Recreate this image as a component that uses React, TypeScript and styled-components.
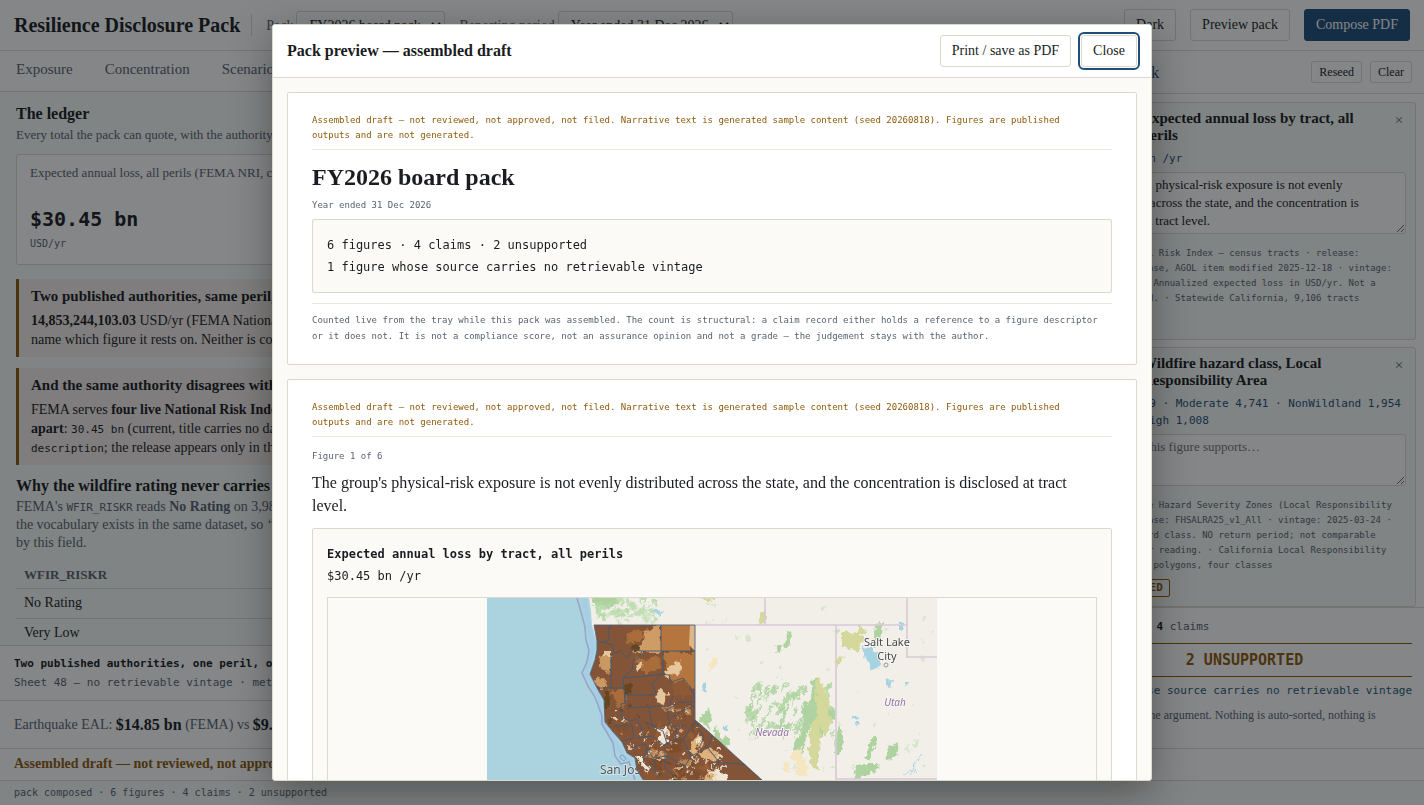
import React from "react";
import styled, { createGlobalStyle, css } from "styled-components";

const serif = `Georgia, "Liberation Serif", serif`;
const mono = `Consolas, "DejaVu Sans Mono", monospace`;

const c = {
  ink: "#1a1c22",
  muted: "#5a6270",
  line: "#ddd8cc",
  soft: "#e8e6df",
  page: "#f7faf6",
  panel: "#ffffff",
  cream: "#fcfaf6",
  amber: "#8f5a0a",
  blue: "#1f4e7a",
  teal: "#1d5c70",
};

const Global = createGlobalStyle`
  *, *::before, *::after { box-sizing: border-box; }
  html, body, #root { height: 100%; }
  body { margin: 0; overflow: hidden; background: ${c.page}; color: ${c.ink}; font: 14px/19px ${serif}; }
  h1, h2, h3, p { margin: 0; }
  button, select, textarea { font-family: inherit; color: inherit; }
`;

/* ---------- shared parts ---------- */

const Button = styled.button<{ $kind?: "primary" | "small"; $focused?: boolean }>`
  height: 32px;
  padding: 0 11px;
  border: 1px solid ${c.line};
  border-radius: 3px;
  background: ${c.panel};
  font-size: 14px;
  line-height: 18px;
  white-space: nowrap;
  ${(p) =>
    p.$kind === "primary" &&
    css`
      border-color: ${c.blue};
      background: ${c.blue};
      color: #fff;
    `}
  ${(p) =>
    p.$kind === "small" &&
    css`
      height: 22px;
      padding: 0 7px;
      font-size: 12px;
      line-height: 16px;
    `}
  ${(p) =>
    p.$focused &&
    css`
      outline: 2px solid ${c.blue};
      outline-offset: 1px;
    `}
`;

/* ---------- page shell ---------- */

const Shell = styled.div`
  display: flex;
  flex-direction: column;
  height: 100vh;
`;

const TopBar = styled.header`
  display: flex;
  align-items: center;
  gap: 14px;
  flex: none;
  height: 51px;
  padding: 0 14px;
  background: ${c.panel};
  border-bottom: 1px solid ${c.line};
`;

const Brand = styled.h1`
  padding-right: 11px;
  border-right: 1px solid ${c.line};
  font-size: 20px;
  line-height: 22px;
  white-space: nowrap;
`;

const Field = styled.label`
  display: flex;
  align-items: center;
  gap: 3px;
  color: ${c.muted};
  font-size: 14px;
  white-space: nowrap;
`;

const Select = styled.select<{ $width: number }>`
  width: ${(p) => p.$width}px;
  height: 28px;
  padding: 0 4px 0 8px;
  border: 1px solid ${c.line};
  border-radius: 3px;
  background: ${c.panel};
  color: ${c.ink};
  font-size: 14px;
`;

const Spacer = styled.div`
  flex: 1;
`;

const Workspace = styled.div`
  display: grid;
  grid-template-columns: minmax(0, 1fr) 360px;
  flex: 1;
  min-height: 0;
`;

const LeftColumn = styled.div`
  display: flex;
  flex-direction: column;
  min-height: 0;
`;

const Tabs = styled.nav`
  display: flex;
  flex: none;
  height: 41px;
  background: ${c.panel};
  border-bottom: 1px solid ${c.line};
`;

const Tab = styled.a`
  padding: 9px 16px;
  color: ${c.muted};
  font-size: 15px;
  text-decoration: none;
`;

const Main = styled.main`
  flex: 1;
  min-height: 0;
  padding: 12px 16px 0;
  overflow: hidden;
`;

const SectionTitle = styled.h2`
  margin-bottom: 2px;
  font-size: 16px;
  line-height: 20px;
`;

const Lead = styled.p`
  margin-bottom: 10px;
  color: ${c.muted};
  font-size: 13px;
  line-height: 18px;
  white-space: nowrap;
`;

const Figures = styled.div`
  display: grid;
  grid-template-columns: 1fr 1fr 1fr;
  gap: 12px;
`;

const FigureCard = styled.section`
  height: 111px;
  padding: 9px 13px;
  border: 1px solid ${c.line};
  border-radius: 3px;
  background: ${c.panel};
  color: ${c.muted};
  font-size: 13px;
  line-height: 18px;
  white-space: nowrap;
  overflow: hidden;
`;

const FigureValue = styled.p`
  margin-top: 24px;
  color: ${c.ink};
  font: bold 20px/26px ${mono};
`;

const FigureUnit = styled.p`
  margin-top: 2px;
  font: 10px/20px ${mono};
`;

const Callout = styled.section`
  margin-top: 11px;
  padding: 7px 12px 8px;
  border-left: 3px solid ${c.amber};
  background: #f4ede8;
  font-size: 14px;
  line-height: 19px;
  white-space: nowrap;
  overflow: hidden;

  ${Figures} + & {
    margin-top: 14px;
  }
  code {
    font: 11px/14px ${mono};
  }
`;

const CalloutTitle = styled.h3`
  margin-bottom: 5px;
  font-size: 15px;
  line-height: 20px;
`;

const Explainer = styled.section`
  margin-top: 11px;
  color: ${c.muted};
  line-height: 18px;
  white-space: nowrap;
  ${SectionTitle} {
    color: ${c.ink};
  }
  code {
    font: 11px/14px ${mono};
  }
`;

const Ratings = styled.table`
  width: 100%;
  margin-top: 11px;
  border-collapse: collapse;
  color: ${c.ink};
  th,
  td {
    height: 30px;
    padding: 0 8px;
    border-bottom: 1px solid ${c.line};
    text-align: left;
  }
  th {
    height: 25px;
    color: ${c.muted};
    font-size: 13px;
  }
`;

const Finding = styled.div`
  flex: none;
  height: 55px;
  padding: 8px 14px;
  border-top: 1px solid ${c.line};
  background: ${c.panel};
  color: ${c.muted};
  font: 11px/19px ${mono};
  white-space: nowrap;
  overflow: hidden;
  b {
    display: block;
    color: ${c.ink};
  }
`;

const Comparison = styled.div`
  display: flex;
  align-items: center;
  flex: none;
  height: 48px;
  padding: 0 14px;
  border-top: 1px solid ${c.line};
  background: ${c.panel};
  color: ${c.muted};
  font-size: 14px;
  white-space: pre;
  b {
    color: ${c.ink};
    font-size: 16px;
  }
`;

const DraftBar = styled.div`
  flex: none;
  height: 32px;
  padding: 5px 14px;
  border-top: 1px solid ${c.line};
  background: ${c.panel};
  color: ${c.amber};
  font-weight: bold;
`;

const StatusBar = styled.footer`
  flex: none;
  height: 25px;
  padding: 0 14px;
  border-top: 1px solid ${c.line};
  color: ${c.muted};
  font: 10px/23px ${mono};
`;

/* ---------- evidence tray ---------- */

const Tray = styled.aside`
  display: flex;
  flex-direction: column;
  min-height: 0;
  border-left: 1px solid ${c.line};
  background: ${c.panel};
`;

const TrayHead = styled.div`
  display: flex;
  align-items: center;
  gap: 8px;
  flex: none;
  height: 43px;
  padding: 0 12px;
  border-bottom: 1px solid ${c.line};
  h2 {
    flex: 1;
    color: ${c.blue};
    font-size: 16px;
    font-weight: normal;
  }
`;

const TrayList = styled.div`
  flex: 1;
  min-height: 0;
  padding: 8px;
  overflow: hidden;
`;

const TrayCard = styled.article`
  min-height: 238px;
  margin-bottom: 7px;
  padding: 7px 9px 8px;
  border: 1px solid ${c.line};
  border-radius: 3px;
  background: ${c.page};
`;

const TrayCardHead = styled.div`
  display: grid;
  grid-template-columns: 51px minmax(0, 1fr) 14px;
  gap: 8px;
  h3 {
    font-size: 15px;
    line-height: 17px;
    white-space: pre-line;
  }
`;

const OrderLabel = styled.span`
  color: ${c.muted};
  font: 10px/17px ${mono};
`;

const Remove = styled.button`
  height: 20px;
  padding: 0;
  border: 0;
  background: none;
  color: ${c.muted};
  font-size: 15px;
`;

const Reading = styled.p`
  margin: 6px 0 5px;
  color: ${c.blue};
  font: 11px/17px ${mono};
  white-space: pre;
`;

const Claim = styled.textarea<{ $tall?: boolean }>`
  display: block;
  width: 100%;
  height: ${(p) => (p.$tall ? 62 : 52)}px;
  padding: 3px 7px;
  border: 1px solid ${c.line};
  border-radius: 3px;
  background: ${c.panel};
  font: 13px/18px ${serif};
  resize: vertical;
  overflow: hidden;
  &::placeholder {
    color: #757575;
  }
`;

const Source = styled.p`
  margin: 12px 0 6px;
  color: ${c.muted};
  font: 9px/15px ${mono};
  white-space: pre-line;
`;

const Chip = styled.span`
  display: inline-block;
  padding: 0 6px;
  border: 1px solid ${c.amber};
  border-radius: 2px;
  color: ${c.amber};
  font: bold 11px/16px ${mono};
  vertical-align: top;
`;

const TrayFoot = styled.div`
  flex: none;
  height: 141px;
  padding: 10px 12px 0;
  border-top: 1px solid ${c.line};
  color: ${c.muted};
  font: 11px/18px ${mono};
  b {
    color: ${c.ink};
  }
`;

const Unsupported = styled.p`
  margin-top: 7px;
  border: solid ${c.amber};
  border-width: 1px 0;
  color: ${c.amber};
  font: bold 15px/32px ${mono};
  text-align: center;
`;

const Vintage = styled.p`
  display: flex;
  justify-content: flex-end;
  margin: 5px 0 6px;
  color: ${c.teal};
  white-space: nowrap;
`;

const Hint = styled.p`
  font: 12px/18px ${serif};
  white-space: pre-line;
`;

/* ---------- preview dialog ---------- */

const Scrim = styled.div`
  position: fixed;
  inset: 0;
  display: flex;
  align-items: center;
  justify-content: center;
  background: rgba(10, 13, 18, 0.5);
`;

const Dialog = styled.div`
  display: flex;
  flex-direction: column;
  width: min(880px, 94vw);
  max-height: 94vh;
  border: 1px solid ${c.line};
  border-radius: 3px;
  background: ${c.cream};
  box-shadow: 0 12px 40px rgba(0, 0, 0, 0.35);
  overflow: hidden;
`;

const DialogHead = styled.div`
  display: flex;
  align-items: center;
  gap: 10px;
  flex: none;
  padding: 10px 14px;
  border-bottom: 1px solid ${c.line};
  background: ${c.panel};
  h2 {
    flex: 1;
    font-size: 16px;
    line-height: 20px;
  }
`;

const DialogBody = styled.div`
  flex: 1;
  min-height: 0;
  padding: 14px;
  overflow-y: auto;
  scrollbar-width: none;
`;

const Sheet = styled.section`
  margin-bottom: 14px;
  padding: 20px 24px;
  border: 1px solid ${c.line};
  border-radius: 2px;
  background: ${c.panel};
`;

const Notice = styled.p`
  padding-bottom: 6px;
  border-bottom: 1px solid ${c.soft};
  color: ${c.amber};
  font: 9px/15px ${mono};
  white-space: pre-line;
`;

const PackTitle = styled.h2`
  margin: 14px 0 8px;
  font-size: 24px;
  line-height: 26px;
`;

const Small = styled.p`
  color: ${c.muted};
  font: 9px/15px ${mono};
`;

const Panel = styled.div`
  margin-top: 6px;
  padding: 14px;
  border: 1px solid ${c.line};
  border-radius: 2px;
  background: ${c.cream};
  font: 12px/22px ${mono};
`;

const Footnote = styled.p`
  margin-top: 10px;
  padding-top: 8px;
  border-top: 1px solid ${c.soft};
  color: ${c.muted};
  font: 9px/16px ${mono};
  white-space: pre-line;
`;

const Narrative = styled.p`
  margin: 7px 0 11px;
  font-size: 16px;
  line-height: 23px;
  white-space: pre-line;
`;

const FigureSheet = styled(Sheet)`
  ${Small} {
    margin-top: 12px;
  }
`;

const MapFrame = styled.div`
  display: flex;
  justify-content: center;
  margin-top: 10px;
  border: 1px solid ${c.line};
`;

/* ---------- map drawing ---------- */

const random = (seed: number) => {
  let s = seed;
  return () => {
    s = (s * 1664525 + 1013904223) % 4294967296;
    return s / 4294967296;
  };
};

const blob = (r: () => number, x: number, y: number, w: number, h: number) => {
  const n = 9;
  const pts: string[] = [];
  for (let i = 0; i < n; i++) {
    const a = (i / n) * Math.PI * 2;
    const k = 0.55 + r() * 0.6;
    pts.push(`${(x + Math.cos(a) * w * k).toFixed(1)},${(y + Math.sin(a) * h * k).toFixed(1)}`);
  }
  return pts.join(" ");
};

const STATE =
  "M107 27H208V122L213 126L275 182L338 240V300H210L190 240L168 200L155 180L150 172L148 160L140 155L135 144L126 134L118 124L117 102L110 90L103 76L108 62L110 52L110 43Z";
const COAST =
  "M102 0L104 14L105 27L108 38L110 43L110 52L108 62L103 76L110 90L117 102L118 124L126 134L135 144L140 155L148 160L150 172L155 180L168 200L190 240L210 300H0V0Z";
const COUNTIES = [
  "M124 27L121 32L122 40L118 45L126 47L127 56L133 53L140 60L146 51L155 53H208",
  "M109 44H120M174 27V53M176 53V76M155 53L152 60L147 62L145 72L136 80L150 79L176 76",
  "M124 56V90M110 90H138M136 80L138 104M138 97H170L165 86L174 76L182 77L184 84L196 80L204 90L208 100",
  "M138 97V105L134 106V119L143 123L150 121L158 138M140 110L160 109L175 108L180 112L192 104H208",
  "M126 128L145 127L147 140L135 143M162 109L165 128L176 133L180 146L196 142L208 122M180 110L183 128L200 128",
  "M150 140L166 138L178 148L178 170L190 180M143 150L158 146L166 160L180 158M196 142L204 158L221 150L232 164",
  "M165 160L170 178M180 158L198 168L204 158M208 122L217 140L212 150M221 150L226 134M226 172L230 164L262 167",
  "M186 98L182 108M158 125L170 128M190 128L188 142M160 150L156 164L165 172M208 108L196 112L184 120",
];

function HazardMap() {
  const r = random(41);
  const browns = ["#7a4c2b", "#8a5534", "#b97a45", "#c48f5a", "#7f5030", "#835437", "#9a5f36", "#835437"];
  const large = Array.from({ length: 80 }, () => {
    const x = 112 + r() * 160;
    const y = 108 + r() * 90;
    return { p: blob(r, x, y, 3 + r() * 6, 3 + r() * 5), f: browns[Math.floor(r() * browns.length)] };
  });
  const specks = Array.from({ length: 200 }, () => {
    const x = 120 + r() * 120;
    const y = 106 + Math.pow(r(), 0.7) * 100;
    return {
      p: blob(r, x, y, 0.6 + r() * 2, 0.6 + r() * 1.8),
      f: ["#f1dfc4", "#dcb684", "#c98f55", "#6a4527", "#f4ece0"][Math.floor(r() * 5)],
    };
  });
  const greens = Array.from({ length: 80 }, () => {
    const x = 260 + r() * 85;
    const y = 88 + r() * 48;
    return { p: blob(r, x, y, 1 + r() * 2.2, 3 + r() * 6), rot: 10 + r() * 18, x, y };
  });
  const north = Array.from({ length: 70 }, () => {
    const x = 108 + r() * 62;
    const y = r() * 24;
    return blob(r, x, y, 1 + r() * 4, 1 + r() * 3);
  });
  const scattered = Array.from({ length: 55 }, () => {
    const x = 212 + r() * 236;
    const y = 4 + r() * 174;
    return blob(r, x, y, 0.8 + r() * 2, 1 + r() * 3);
  });
  return (
    <svg width="450" height="300" viewBox="0 0 450 300" role="img" aria-label="Expected annual loss by tract">
      <filter id="rough" x="0" y="0" width="450" height="300" filterUnits="userSpaceOnUse" colorInterpolationFilters="sRGB">
        <feTurbulence type="fractalNoise" baseFrequency="0.16" numOctaves="3" seed="4" />
        <feDisplacementMap in="SourceGraphic" scale="9" xChannelSelector="R" yChannelSelector="G" />
      </filter>
      <rect width="450" height="300" fill="#f2efe9" />
      <g filter="url(#rough)">
        <g fill="#b5d9a8">
          <polygon points="100,-4 127,-4 132,6 122,10 108,8" fill="#add19e" />
          {north.map((p, i) => (
            <polygon key={i} points={p} opacity={i % 2 ? 0.5 : 0.8} />
          ))}
          {scattered.map((p, i) => (
            <polygon key={i} points={p} opacity="0.45" />
          ))}
        </g>
        <g fill="#aed3a0">
          {greens.map((g, i) => (
            <polygon key={i} points={g.p} transform={`rotate(${g.rot} ${g.x} ${g.y})`} opacity="0.85" />
          ))}
          <path d="M300 35l4 2-2 12-4 2zM290 46l5 2-2 6-5-1zM378 160l8-22 4 4-8 20zM348 140l6-14 3 20-8 12zM306 152l10-22 4 8-6 20zM388 28l8-4-2 22-8 4zM212 122l8-10 4 4-2 16zM370 166l22 0-2 8-24 8z" />
          <path d="M326 80l6 0-2 20 6 40-8 10-6-30zM314 106l8-2 4 20-8 12zM338 104l8 6 2 12-6 0z" />
          <path d="M228 128l8 10 8 8-4 6-12-8zM402 148l10-4-2 14-10 4z" />
        </g>
        <g fill="#d5d89b">
          <path d="M328 80l6-2 8 28 2 22-6 10-8-14zM322 132l8-12 4 22-4 32-8-12z" />
          <path d="M355 36l16-2 6 8-8 12-14-6zM370 29l10 2-2 6-8-2zM349 62l8-4-6 12zM274 14l4-2v14h-6zM216 0h12v2h-12z" />
        </g>
        <path d="M304 156l8-6 8 14 2 16-12-4zM296 164l8 2-2 8-8 0zM226 62l4-4-2 12-6 2z" fill="#f6e6c0" />
        <g fill="#a6d3e2">
          <path d="M376 48l6 2 8 6 4 12-8 4-8-12zM399 80l6 2-2 8-4-2zM214 86l5-2 2 10-5 0zM412 24h3v8h-3zM166 14l3-4 6 6-3 2zM416 84h4v3h-4zM236 128h3v6h-3zM366 118l6-1-1 3-5 1zM368 124l4 0-1 3-4 1z" />
          <path d="M434 156l-10 18-8 4-8 6M424 174l4-2" fill="none" stroke="#a6d3e2" />
        </g>
      </g>
      <path d="M208 27H420M278 0V27M349 27V181H450M420 0V59H450M349 181V300" fill="none" stroke="#d9c9d7" strokeWidth="1.6" />
      <path d={COAST} fill="#aad3df" />
      <path
        d="M97 0L102 28L106 50L99 76L112 98L115 124L128 143L136 158L144 164"
        fill="none"
        stroke="#a6cde6"
        strokeWidth="4"
      />
      <path
        d="M90 0L94 14L98 29L99 42L102 52L100 64L95 75L101 88L108 99L115 118L115 126L126 145L128 158L134 166L142 164L148 182L160 210"
        fill="none"
        stroke="#9aa5c8"
        strokeWidth="1.6"
      />
      <path d="M133 158l3-1 3 4-2 2-4-3z" fill="none" stroke="#7ea3c4" />
      <text x="113" y="176" fontFamily="Noto Sans" fontSize="12" fill="#555" stroke="#cfe5ec" strokeWidth="2" paintOrder="stroke">
        San Jose
      </text>
      <clipPath id="state">
        <path d={STATE} />
      </clipPath>
      <g clipPath="url(#state)">
        <path d={STATE} fill="#835437" />
        <g filter="url(#rough)">
          <path d="M178 55h50v47l-30-16-14-4-6-4z" fill="#b5753f" />
          <path d="M158 35l16-12v32h-26l-4-4 10-5z" fill="#cf9c65" />
          <path d="M143 33l10-2 4 8-10 6-8-2zM148 60l12 2 12-4 2 12-16 5-6-8zM124 92h14v20l-8-4z" fill="#a96d3c" />
          <path d="M113 58l8-4 3 12-2 10-10-8zM108 82l8-4 6 12h-10z" fill="#cc9861" />
          <path d="M117 53h6v5h-6zM149 66l4-2 3 6-5 5zM178 72l12-8 5-2 1 8-6 8-6-2-2 6zM168 100l6-10 6 6-4 12z" fill="#e6c69c" />
          <path d="M117 92l7 4-2 12-5 2zM138 86l7-2-1 10-6 2zM145 46l7 2-2 6-6-2z" fill="#66451e" />
          {large.map((b, i) => (
            <polygon key={i} points={b.p} fill={b.f} opacity="0.8" />
          ))}
          <path d="M184 84l14-2 8 16h-18z" fill="#8d5937" />
          <path d="M208 122l70 62h-50l-14-28-8-16z" fill="#835437" />
          <path d="M200 152l10-16 6 4-8 18zM210 156l16-6 8 8-12 6zM218 178l10-10 8 8 4 14h-24z" fill="#dfb27d" />
          <path d="M172 132l8-2 2 14-8 4zM148 158l6 0 10 14-4 2zM222 176l10-8 8 14-8 8z" fill="#f1e6d6" />
          {specks.map((b, i) => (
            <polygon key={i} points={b.p} fill={b.f} opacity="0.85" />
          ))}
        </g>
        <path d="M174 27h29v26h-29z" fill="#b5753f" />
        <path d="M203 27h5v26l-6-6z" fill="#dcb684" />
        <g fill="none" stroke="#3f5a74" strokeWidth="0.9">
          {COUNTIES.map((d) => (
            <path key={d} d={d} />
          ))}
        </g>
      </g>
      <path d={STATE} fill="none" stroke="#4c6078" strokeWidth="0.9" />
      <g fontFamily="Noto Sans" textAnchor="middle" stroke="#f7f5f1" strokeWidth="2" paintOrder="stroke">
        <g fontSize="11" fill="#4a4a4a">
          <text x="400" y="48">Salt Lake</text>
          <text x="400" y="62">City</text>
        </g>
        <g fontSize="10" fontStyle="italic" fill="#9473a3">
          <text x="408" y="108">Utah</text>
          <text x="285" y="138">Nevada</text>
        </g>
      </g>
      <circle cx="399" cy="67" r="2" fill="#eee" stroke="#999" />
    </svg>
  );
}

/* ---------- page ---------- */

const DRAFT =
  "Assembled draft — not reviewed, not approved, not filed. Narrative text is generated sample content (seed 20260818). Figures are published\noutputs and are not generated.";
const CLAIM =
  "The group's physical-risk exposure is not evenly\ndistributed across the state, and the concentration is\ndisclosed at tract level.";

export default function App() {
  return (
    <>
      <Global />
      <Shell>
        <TopBar>
          <Brand>Resilience Disclosure Pack</Brand>
          <Field>
            Pack
            <Select $width={149}>
              <option>FY2026 board pack</option>
            </Select>
          </Field>
          <Field>
            Reporting period
            <Select $width={175}>
              <option>Year ended 31 Dec 2026</option>
            </Select>
          </Field>
          <Spacer />
          <Button>Dark</Button>
          <Button>Preview pack</Button>
          <Button $kind="primary">Compose PDF</Button>
        </TopBar>
        <Workspace>
          <LeftColumn>
            <Tabs>
              <Tab href="#exposure">Exposure</Tab>
              <Tab href="#concentration">Concentration</Tab>
              <Tab href="#scenarios">Scenarios</Tab>
            </Tabs>
            <Main>
              <SectionTitle>The ledger</SectionTitle>
              <Lead>Every total the pack can quote, with the authority behind it.</Lead>
              <Figures>
                <FigureCard>
                  Expected annual loss, all perils (FEMA NRI, current)
                  <FigureValue>$30.45 bn</FigureValue>
                  <FigureUnit>USD/yr</FigureUnit>
                </FigureCard>
              </Figures>
              <Callout>
                <CalloutTitle>Two published authorities, same peril, same state</CalloutTitle>
                <p>
                  <b>14,853,244,103.03</b> USD/yr (FEMA National)
                  <br />
                  name which figure it rests on. Neither is correct.
                </p>
              </Callout>
              <Callout>
                <CalloutTitle>And the same authority disagrees with itself</CalloutTitle>
                <p>
                  FEMA serves <b>four live National Risk Index layers</b>
                  <br />
                  <b>apart</b>: <code>30.45 bn</code> (current, title carries no date)
                  <br />
                  <code>description</code>; the release appears only in the item
                </p>
              </Callout>
              <Explainer>
                <SectionTitle>Why the wildfire rating never carries a map</SectionTitle>
                <p>
                  FEMA's <code>WFIR_RISKR</code> reads <b>No Rating</b> on 3,984 tracts
                  <br />
                  the vocabulary exists in the same dataset, so <i>“the rating</i>
                  <br />
                  by this field.
                </p>
                <Ratings>
                  <thead>
                    <tr>
                      <th>WFIR_RISKR</th>
                    </tr>
                  </thead>
                  <tbody>
                    <tr>
                      <td>No Rating</td>
                    </tr>
                    <tr>
                      <td>Very Low</td>
                    </tr>
                  </tbody>
                </Ratings>
              </Explainer>
            </Main>
            <Finding>
              <b>Two published authorities, one peril, one state</b>
              Sheet 48 — no retrievable vintage · method
            </Finding>
            <Comparison>
              Earthquake EAL: <b>$14.85 bn</b> (FEMA) vs <b>$9.60 bn</b>
            </Comparison>
          </LeftColumn>
          <Tray>
            <TrayHead>
              <h2>Claims stack</h2>
              <Button $kind="small">Reseed</Button>
              <Button $kind="small">Clear</Button>
            </TrayHead>
            <TrayList>
              <TrayCard>
                <TrayCardHead>
                  <OrderLabel>Fig. 1</OrderLabel>
                  <h3>{"Expected annual loss by tract, all\nperils"}</h3>
                  <Remove aria-label="Remove figure 1">×</Remove>
                </TrayCardHead>
                <Reading>≈ $30.45 bn /yr</Reading>
                <Claim $tall aria-label="Claim for figure 1" defaultValue={CLAIM} />
                <Source>
                  {
                    "FEMA National Risk Index — census tracts · release:\ncurrent release, AGOL item modified 2025-12-18 · vintage:\n2025-12-18 · Annualized expected loss in USD/yr. Not a\nreturn period. · Statewide California, 9,106 tracts"
                  }
                </Source>
              </TrayCard>
              <TrayCard>
                <TrayCardHead>
                  <OrderLabel>Fig. 2</OrderLabel>
                  <h3>{"Wildfire hazard class, Local\nResponsibility Area"}</h3>
                  <Remove aria-label="Remove figure 2">×</Remove>
                </TrayCardHead>
                <Reading>{"Total 8,049 · Moderate 4,741 · NonWildland 1,954\n  · Very High 1,008"}</Reading>
                <Claim aria-label="Claim for figure 2" placeholder="The claim this figure supports…" />
                <Source>
                  {
                    "CAL FIRE Fire Hazard Severity Zones (Local Responsibility\nArea) · release: FHSALRA25_v1_All · vintage: 2025-03-24 ·\nOrdinal hazard class. NO return period; not comparable\nto a per-year reading. · California Local Responsibility\nArea, 15,752 polygons, four classes"
                  }
                </Source>
                <Chip>UNSUPPORTED</Chip>
              </TrayCard>
            </TrayList>
            <TrayFoot>
              <p>
                <b>6</b> figures · <b>4</b> claims
              </p>
              <Unsupported>2 UNSUPPORTED</Unsupported>
              <Vintage>1 figure whose source carries no retrievable vintage</Vintage>
              <Hint>{"Stack order is the argument. Nothing is auto-sorted, nothing is\nscored."}</Hint>
            </TrayFoot>
          </Tray>
        </Workspace>
        <DraftBar>Assembled draft — not reviewed, not approved, not filed.</DraftBar>
        <StatusBar>pack composed · 6 figures · 4 claims · 2 unsupported</StatusBar>
      </Shell>
      <Scrim>
        <Dialog role="dialog" aria-modal="true" aria-labelledby="preview-title">
          <DialogHead>
            <h2 id="preview-title">Pack preview — assembled draft</h2>
            <Button>Print / save as PDF</Button>
            <Button $focused>Close</Button>
          </DialogHead>
          <DialogBody>
            <Sheet>
              <Notice>{DRAFT}</Notice>
              <PackTitle>FY2026 board pack</PackTitle>
              <Small>Year ended 31 Dec 2026</Small>
              <Panel>
                <p>6 figures · 4 claims · 2 unsupported</p>
                <p>1 figure whose source carries no retrievable vintage</p>
              </Panel>
              <Footnote>
                {
                  "Counted live from the tray while this pack was assembled. The count is structural: a claim record either holds a reference to a figure descriptor\nor it does not. It is not a compliance score, not an assurance opinion and not a grade — the judgement stays with the author."
                }
              </Footnote>
            </Sheet>
            <FigureSheet>
              <Notice>{DRAFT}</Notice>
              <Small>Figure 1 of 6</Small>
              <Narrative>
                {
                  "The group's physical-risk exposure is not evenly distributed across the state, and the concentration is disclosed at tract\nlevel."
                }
              </Narrative>
              <Panel>
                <p>
                  <b>Expected annual loss by tract, all perils</b>
                </p>
                <p>$30.45 bn /yr</p>
                <MapFrame>
                  <HazardMap />
                </MapFrame>
              </Panel>
            </FigureSheet>
          </DialogBody>
        </Dialog>
      </Scrim>
    </>
  );
}
